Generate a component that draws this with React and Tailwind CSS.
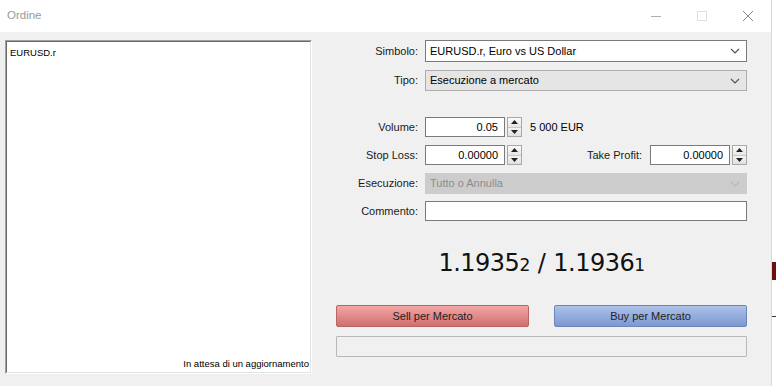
import React from "react";

const F = { fontFamily: '"Liberation Sans", Arial, sans-serif' };

function Chevron({ color = "#555" }) {
  return (
    <svg width="10" height="6" viewBox="0 0 10 6" className="shrink-0">
      <path d="M1 1 L5 5 L9 1" fill="none" stroke={color} strokeWidth="1.2" />
    </svg>
  );
}

function Spinner() {
  return (
    <div className="ml-[2px] flex h-[20px] w-[15px] flex-col border border-[#a9a9a9] bg-[#f0f0f0]">
      <div className="flex flex-1 items-center justify-center border-b border-[#c8c8c8] bg-gradient-to-b from-[#fafafa] to-[#e6e6e6]">
        <svg width="7" height="4" viewBox="0 0 7 4"><path d="M0 4 L3.5 0 L7 4Z" fill="#222" /></svg>
      </div>
      <div className="flex flex-1 items-center justify-center bg-gradient-to-b from-[#f3f3f3] to-[#e0e0e0]">
        <svg width="7" height="4" viewBox="0 0 7 4"><path d="M0 0 L3.5 4 L7 0Z" fill="#222" /></svg>
      </div>
    </div>
  );
}

function Label({ children }) {
  return <div className="w-[82px] shrink-0 text-right text-[#1a1a1a]">{children}</div>;
}

export default function App() {
  return (
    <div className="flex h-[386px] w-[776px] overflow-hidden bg-white text-[11px]" style={F}>
      <div className="flex h-full w-[772px] flex-col border-r border-[#d8d8d8] bg-[#f0f0f0]">
        {/* Title bar */}
        <div className="flex h-[32px] shrink-0 items-center bg-white">
          <div className="pl-[7px] text-[11.5px] text-[#9a9a9a]">Ordine</div>
          <div className="flex-1" />
          <div className="flex h-full w-[46px] items-center justify-center">
            <svg width="12" height="10" viewBox="0 0 12 10"><path d="M1 5.5 H11" stroke="#b0b0b0" strokeWidth="1" /></svg>
          </div>
          <div className="flex h-full w-[46px] items-center justify-center">
            <svg width="12" height="12" viewBox="0 0 12 12"><rect x="1.5" y="1.5" width="9" height="9" fill="none" stroke="#e0e0e0" strokeWidth="1" /></svg>
          </div>
          <div className="flex h-full w-[46px] items-center justify-center">
            <svg width="12" height="12" viewBox="0 0 12 12"><path d="M1 1 L11 11 M11 1 L1 11" stroke="#8a8a8a" strokeWidth="1" /></svg>
          </div>
        </div>

        {/* Body */}
        <div className="flex flex-1">
          {/* Left list */}
          <div className="ml-[5px] mt-[8px] h-[334px] w-[307px] border-b border-l border-r border-t border-b-white border-l-[#a0a0a0] border-r-white border-t-[#a0a0a0]">
            <div className="flex h-full flex-col border-b border-l border-r border-t border-b-[#e3e3e3] border-l-[#696969] border-r-[#e3e3e3] border-t-[#696969] bg-white">
              <div className="pl-[3px] pt-[4px] text-[9.5px] text-black">EURUSD.r</div>
              <div className="flex-1" />
              <div className="pb-[1px] pr-[1px] text-right text-[9.5px] text-black">In attesa di un aggiornamento</div>
            </div>
          </div>

          {/* Right form */}
          <div className="ml-[24px] mt-[8px] flex w-[411px] flex-col">
            <div className="flex h-[22px] items-center">
              <Label>Simbolo:</Label>
              <div className="ml-[7px] flex h-[22px] flex-1 items-center border border-[#7a7a7a] bg-white pl-[4px] pr-[6px]">
                <span className="flex-1 text-black">EURUSD.r, Euro vs US Dollar</span>
                <Chevron />
              </div>
            </div>
            <div className="mt-[8px] flex h-[21px] items-center">
              <Label>Tipo:</Label>
              <div className="ml-[7px] flex h-[21px] flex-1 items-center border border-[#adadad] bg-[#e5e5e5] pl-[4px] pr-[6px]">
                <span className="flex-1 text-black">Esecuzione a mercato</span>
                <Chevron />
              </div>
            </div>

            <div className="mt-[26px] flex h-[20px] items-center">
              <Label>Volume:</Label>
              <div className="ml-[7px] flex h-[20px] w-[80px] items-center justify-end border border-[#7a7a7a] bg-white pr-[6px] text-black">0.05</div>
              <Spinner />
              <div className="ml-[8px] text-black">5 000 EUR</div>
            </div>
            <div className="mt-[8px] flex h-[20px] items-center">
              <Label>Stop Loss:</Label>
              <div className="ml-[7px] flex h-[20px] w-[80px] items-center justify-end border border-[#7a7a7a] bg-white pr-[6px] text-black">0.00000</div>
              <Spinner />
              <div className="flex-1 pr-[8px] text-right text-[#1a1a1a]">Take Profit:</div>
              <div className="flex h-[20px] w-[80px] items-center justify-end border border-[#7a7a7a] bg-white pr-[6px] text-black">0.00000</div>
              <Spinner />
            </div>
            <div className="mt-[8px] flex h-[21px] items-center">
              <Label>Esecuzione:</Label>
              <div className="ml-[7px] flex h-[21px] flex-1 items-center border border-[#cccccc] bg-[#cccccc] pl-[4px] pr-[6px]">
                <span className="flex-1 text-[#8c8c8c]">Tutto o Annulla</span>
                <Chevron color="#b8b8b8" />
              </div>
            </div>
            <div className="mt-[7px] flex h-[20px] items-center">
              <Label>Commento:</Label>
              <div className="ml-[7px] h-[20px] flex-1 border border-[#7a7a7a] bg-white" />
            </div>

            <div className="mt-[24px] flex h-[36px] items-center justify-center text-[#111]" style={{ fontFamily: '"DejaVu Sans", Verdana, sans-serif', letterSpacing: "-0.5px" }}>
              <div className="flex items-baseline text-[24px] leading-none">
                <span>1.1935</span>
                <span className="text-[17px]">2</span>
                <span className="mx-[8px]">/</span>
                <span>1.1936</span>
                <span className="text-[17px]">1</span>
              </div>
            </div>

            <div className="mt-[24px] flex h-[22px] justify-between">
              <div className="flex w-[193px] items-center justify-center rounded-[2px] border border-[#b86565] bg-gradient-to-b from-[#f4a6a6] to-[#d06f6f] text-[#222]">Sell per Mercato</div>
              <div className="flex w-[193px] items-center justify-center rounded-[2px] border border-[#6e87bb] bg-gradient-to-b from-[#adc1ea] to-[#7d99d0] text-[#222]">Buy per Mercato</div>
            </div>
            <div className="mt-[9px] h-[21px] w-[411px] rounded-[1px] border border-[#b8b8b8] bg-[#f0f0f0]" />
          </div>
        </div>
      </div>
      <div className="flex w-[4px] flex-col bg-white">
        <div className="h-[262px]" />
        <div className="h-[18px] bg-[#6b0f0f]" />
        <div className="h-[36px]" />
        <div className="h-[1px] bg-[#333]" />
      </div>
    </div>
  );
}
